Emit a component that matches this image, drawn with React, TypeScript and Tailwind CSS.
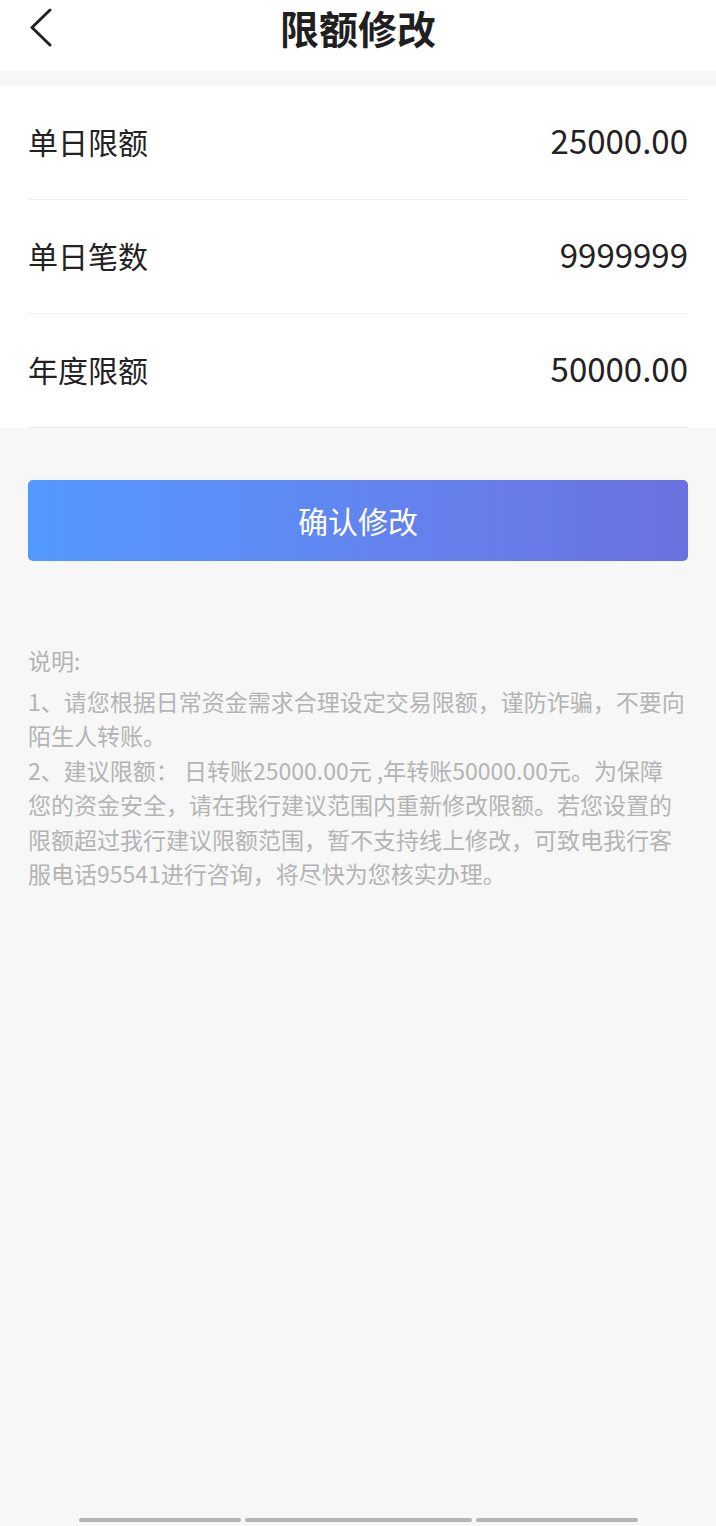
import React from 'react';

const rows = [
  { label: '单日限额', value: '25000.00' },
  { label: '单日笔数', value: '9999999' },
  { label: '年度限额', value: '50000.00' },
];

const App: React.FC = () => {
  return (
    <div
      className="min-h-[1526px] bg-[#f7f7f7] flex flex-col"
      style={{ fontFamily: '"Noto Sans CJK SC", "Noto Sans", sans-serif' }}
    >
      {/* header */}
      <div className="h-[71px] bg-white relative flex items-center justify-center">
        <button className="absolute left-[24px] top-[4px] w-[34px] h-[46px] flex items-center justify-center">
          <svg width="24" height="40" viewBox="0 0 24 40" fill="none">
            <polyline
              points="21,3 3,20.5 21,38"
              stroke="#222"
              strokeWidth="3"
              strokeLinecap="round"
              strokeLinejoin="round"
            />
          </svg>
        </button>
        <h1 className="text-[39px] font-bold text-[#1f1f1f] leading-none -mt-[16px]">限额修改</h1>
      </div>

      {/* limits list */}
      <div className="mt-[15px] bg-white">
        {rows.map((r) => (
          <div key={r.label} className="mx-[28px] h-[114px] flex items-center justify-between border-b border-[#eeeeee]">
            <span className="text-[30px] text-[#222] -mt-[3px]">{r.label}</span>
            <span className="text-[33px] text-[#222] -mt-[3px]">{r.value}</span>
          </div>
        ))}
      </div>

      {/* confirm */}
      <div className="px-[28px] mt-[52px]">
        <button className="w-full h-[81px] rounded-[5px] bg-gradient-to-r from-[#5299ff] to-[#6b71e0] text-white text-[30px] flex items-center justify-center">
          确认修改
        </button>
      </div>

      {/* notes */}
      <div className="px-[28px] mt-[82px] text-[23px] leading-[34.5px] text-[#b4b4b4]">
        <p className="mb-[6px]">说明:</p>
        <p>1、请您根据日常资金需求合理设定交易限额，谨防诈骗，不要向陌生人转账。</p>
        <p>
          2、建议限额： 日转账25000.00元 ,年转账50000.00元。为保障
          <br />
          您的资金安全，请在我行建议范围内重新修改限额。若您设置的
          <br />
          限额超过我行建议限额范围，暂不支持线上修改，可致电我行客
          <br />
          服电话95541进行咨询，将尽快为您核实办理。
        </p>
      </div>

      <div className="flex-1" />

      {/* bottom bars */}
      <div className="h-[6px] flex justify-center gap-[4px] mb-[2px]">
        <div className="w-[162px] h-[4px] rounded-full bg-[#b4b4b4]" />
        <div className="w-[227px] h-[4px] rounded-full bg-[#b4b4b4]" />
        <div className="w-[162px] h-[4px] rounded-full bg-[#b4b4b4]" />
      </div>
    </div>
  );
};

export default App;
